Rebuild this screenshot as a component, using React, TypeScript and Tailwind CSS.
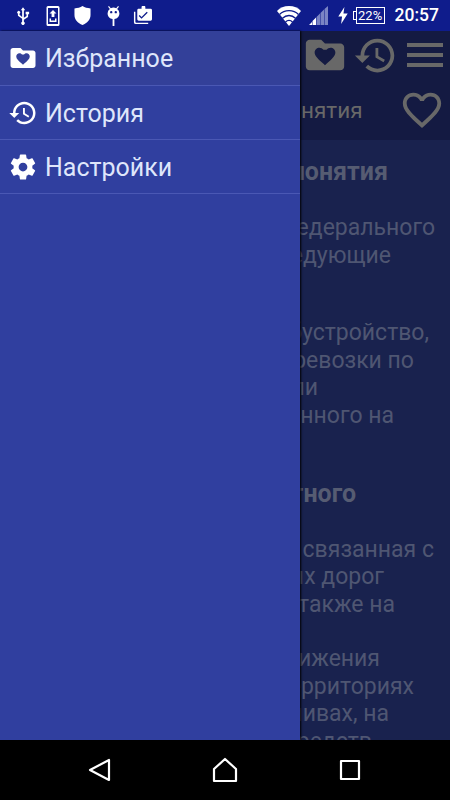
const folderHeart =
  'M10 4H4c-1.1 0-2 .9-2 2v12c0 1.1.9 2 2 2h16c1.1 0 2-.9 2-2V8c0-1.1-.9-2-2-2h-8l-2-2zM12 17.3l-.8-.7C8.3 14 6.6 12.5 6.6 10.7c0-1.4 1.1-2.5 2.5-2.5.8 0 1.6.4 2.1 1h1.6c.5-.6 1.3-1 2.1-1 1.4 0 2.5 1.100 2.500 2.500 0 1.800-1.700 3.300-4.600 5.900l-.8.7z'
const history =
  'M13 3c-4.970 0-9 4.030-9 9H1l3.890 3.890.070.140L9 12H6c0-3.870 3.130-7 7-7s7 3.130 7 7-3.130 7-7 7c-1.930 0-3.680-.790-4.940-2.060l-1.420 1.420C8.270 19.990 10.510 21 13 21c4.970 0 9-4.030 9-9s-4.030-9-9-9zm-1 5v5l4.280 2.540.720-1.210-3.500-2.080V8H12z'
const gear =
  'M19.430 12.980c.040-.320.070-.640.070-.980s-.030-.660-.070-.980l2.110-1.650c.190-.150.240-.420.120-.640l-2-3.460c-.120-.220-.390-.300-.610-.220l-2.490 1c-.520-.400-1.080-.730-1.690-.980l-.380-2.650C14.460 2.180 14.250 2 14 2h-4c-.250 0-.460.180-.490.420l-.380 2.650c-.610.250-1.170.590-1.690.980l-2.490-1c-.230-.090-.490 0-.610.220l-2 3.460c-.130.220-.070.490.120.640l2.110 1.650c-.040.320-.070.650-.070.980s.030.660.070.980l-2.110 1.650c-.190.150-.240.420-.120.640l2 3.460c.120.220.390.300.610.220l2.490-1c.520.400 1.080.730 1.690.980l.380 2.650c.030.240.240.420.490.420h4c.250 0 .460-.180.490-.420l.380-2.650c.610-.250 1.170-.590 1.690-.980l2.490 1c.230.090.490 0 .610-.220l2-3.460c.120-.220.070-.490-.120-.640l-2.110-1.650zM12 15.500c-1.930 0-3.500-1.570-3.500-3.500s1.570-3.500 3.500-3.500 3.500 1.570 3.500 3.500-1.570 3.500-3.500 3.500z'
const heartOutline =
  'M16.500 3c-1.740 0-3.410.810-4.500 2.090C10.910 3.810 9.240 3 7.500 3 4.420 3 2 5.420 2 8.500c0 3.780 3.400 6.860 8.550 11.540L12 21.350l1.450-1.320C18.600 15.360 22 12.280 22 8.500 22 5.420 19.580 3 16.500 3zm-4.400 15.550l-.1.100-.1-.1C7.140 14.240 4 11.390 4 8.500 4 6.500 5.500 5 7.500 5c1.540 0 3.040.990 3.570 2.360h1.870C13.460 5.990 14.960 5 16.500 5c2 0 3.500 1.500 3.500 3.500 0 2.890-3.140 5.740-7.900 10.050z'

function Icon({ d, className }: { d: string; className: string }) {
  return (
    <svg viewBox="0 0 24 24" fill="currentColor" fillRule="evenodd" className={className}>
      <path d={d} />
    </svg>
  )
}

function StatusBar() {
  return (
    <div className="h-[31px] shrink-0 bg-[#0f1c8c] flex items-center text-white">
      <svg viewBox="0 0 16 20" className="w-[14px] h-[18px] ml-[16px]" fill="currentColor">
        <path d="M8 0l2.500 3.500H9V12l3-2V8H11V5h4v3h-1.200v3L9 14.200V16.500a2 2 0 1 1-2 0V13L2.200 9.600V7.400a1.700 1.700 0 1 1 1.800 0V8.700L7 11V3.500H5.500z" />
      </svg>
      <svg viewBox="0 0 14 20" className="w-[14px] h-[20px] ml-[16px]" fill="currentColor" fillRule="evenodd">
        <path d="M2 0h10a1.500 1.500 0 0 1 1.500 1.500v17A1.500 1.500 0 0 1 12 20H2a1.500 1.500 0 0 1-1.500-1.500v-17A1.500 1.500 0 0 1 2 0zM2 2v16h10V2zM7 4l3.500 3.500H8.400V11H5.600V7.500H3.500zM3.500 12.500h1.500v2h4v-2h1.500V16h-7z" />
      </svg>
      <svg viewBox="0 0 18 20" className="w-[17px] h-[19px] ml-[14px]" fill="currentColor">
        <path d="M9 0c2.500 1.500 5 2.300 8.500 2.500v7c0 5-3.500 8.500-8.500 10.500C4 18 .5 14.500.5 9.500v-7C4 2.300 6.500 1.500 9 0z" />
      </svg>
      <svg viewBox="0 0 16 22" className="w-[15px] h-[20px] ml-[15px]" fill="currentColor" fillRule="evenodd">
        <path d="M3 0l2 2.500a6.500 6.500 0 0 1 6 0L13 0l1 .8-2 2.500a6 6 0 0 1 2.500 4.700C14.500 11.500 12 14 9 14.400V22H7v-7.600C4 14 1.500 11.500 1.500 8A6 6 0 0 1 4 3.300L2 .8zM5.500 5.500a1.300 1.300 0 1 0 0 2.600 1.300 1.300 0 0 0 0-2.600zM10.500 5.500a1.300 1.300 0 1 0 0 2.600 1.300 1.300 0 0 0 0-2.600z" />
      </svg>
      <svg viewBox="0 0 20 20" className="w-[19px] h-[19px] ml-[12px]" fill="currentColor" fillRule="evenodd">
        <path d="M5.500 3H9V1.500a2 2 0 0 1 4 0V3h5.500A1.500 1.500 0 0 1 20 4.500V14a1.500 1.500 0 0 1-1.500 1.500H6A1.500 1.500 0 0 1 4.500 14V4.500A1.500 1.500 0 0 1 5.500 3zM9 11.500l-2-2-1 1 3 3 6.500-6.500-1-1z" />
        <path d="M1 6h1.500v10.500a1 1 0 0 0 1 1H16V19H3a2 2 0 0 1-2-2z" />
      </svg>
      <div className="flex-1" />
      <svg viewBox="0 0 24 20" className="w-[24px] h-[20px] ml-[3px]" fill="none">
        <path d="M12 20L0 5C3 1.800 7 0 12 0s9 1.800 12 5z" fill="#ffffff" />
        <path d="M2.500 8.500C5 6 8.500 4.700 12 4.700s7 1.300 9.500 3.800M5.500 12.300C7.300 10.500 9.600 9.500 12 9.500s4.700 1 6.500 2.800M8.500 16C9.500 15 10.700 14.400 12 14.400s2.500.6 3.500 1.600" stroke="#0f1c8c" strokeWidth="1.300" />
      </svg>
      <svg viewBox="0 0 19 19" className="w-[19px] h-[19px] ml-[8px]">
        <path d="M0 19l3-3v3zM3.500 19v-4l3.500-3.500V19z" fill="#ffffff" />
        <path d="M7.500 19v-8l3.500-3.500V19zM11.500 19V7l3.500-3.500V19zM15.500 19V3L19 0v19z" fill="#7a84c4" />
      </svg>
      <svg viewBox="0 0 10 18" className="w-[10px] h-[17px] ml-[10px]" fill="currentColor">
        <path d="M6.500 0L0 10h4l-1 8 7-11H5.500z" />
      </svg>
      <div className="ml-[5px] w-[3px] h-[9px] border-l-[1.500px] border-y-[1.500px] border-white" />
      <div className="w-[29px] h-[17px] border border-white text-[13px] leading-[15px] text-center font-['Roboto',sans-serif]">
        22%
      </div>
      <span className="ml-[10px] mr-[11px] text-[17.500px] font-medium font-['Roboto',sans-serif]">20:57</span>
    </div>
  )
}

function Line({ end, bold, className, children }: { end: number; bold?: boolean; className?: string; children: string }) {
  return (
    <div
      className={`flex justify-end whitespace-nowrap leading-[27.500px] ${
        bold ? 'text-[25px] font-bold text-[#565c72]' : 'text-[23px] text-[#4f5672]'
      } ${className ?? ''}`}
      style={{ paddingRight: 450 - end }}
    >
      <span className="shrink-0">{children}</span>
    </div>
  )
}

function PageBehind() {
  return (
    <div className="flex-1 flex flex-col overflow-hidden ml-[300px] min-w-0 bg-[#19224e] font-['Roboto',sans-serif]">
      <div className="h-[54px] shrink-0 bg-[#141a42] flex items-center text-[#686868] pb-[6px]">
        <Icon d={folderHeart} className="w-[46px] h-[46px] ml-[2px]" />
        <Icon d={history} className="w-[45px] h-[45px] ml-[5px]" />
        <div className="ml-[9px] flex flex-col gap-[6px]">
          <div className="w-[36px] h-[4px] bg-[#686868]" />
          <div className="w-[36px] h-[4px] bg-[#686868]" />
          <div className="w-[36px] h-[4px] bg-[#686868]" />
        </div>
      </div>
      <div className="h-[55px] shrink-0 bg-[#141a42] flex items-center justify-between text-[#686868]">
        <span className="text-[22.500px] ml-[1px] mb-[3px]">нятия</span>
        <Icon d={heartOutline} className="w-[46px] h-[46px] mr-[5px] mb-[6px]" />
      </div>
      <div className="pt-[17.500px]">
        <Line end={388} bold>понятия</Line>
        <Line end={435} className="mt-[29px]">Федерального</Line>
        <Line end={391}>следующие</Line>
        <Line end={429} className="mt-[50px]">обустройство,</Line>
        <Line end={414}>перевозки по</Line>
        <Line end={318}>или</Line>
        <Line end={394}>установленного на</Line>
        <Line end={356} bold className="mt-[51px]">транспортного</Line>
        <Line end={434} className="mt-[28px]">связанная с</Line>
        <Line end={384}>автомобильных дорог</Line>
        <Line end={395}>а также на</Line>
        <Line end={380} className="mt-[27px]">движения</Line>
        <Line end={414}>территориях</Line>
        <Line end={389}>заливах, на</Line>
        <Line end={372}>средств</Line>
      </div>
    </div>
  )
}

function DrawerItem({ d, label, className }: { d: string; label: string; className: string }) {
  return (
    <div className={`border-b border-[#4a58b4] flex items-center pl-[8px] gap-[7px] ${className}`}>
      <Icon d={d} className="w-[30px] h-[30px] text-white" />
      <span className="text-[25px] leading-[30px] pt-[2px] text-[#dfe6fb] font-['Roboto',sans-serif]">{label}</span>
    </div>
  )
}

export default function App() {
  return (
    <div className="w-[450px] h-[800px] flex flex-col overflow-hidden bg-black">
      <StatusBar />
      <div className="relative flex-1 flex min-h-0">
        <PageBehind />
        <div className="absolute left-0 top-0 bottom-0 w-[300px] bg-[#303f9f] shadow-[1px_0_2px_#000]">
          <DrawerItem d={folderHeart} label="Избранное" className="h-[55px] bg-[#334099]" />
          <DrawerItem d={history} label="История" className="h-[54px]" />
          <DrawerItem d={gear} label="Настройки" className="h-[54px]" />
        </div>
      </div>
      <div className="h-[60px] shrink-0 bg-black flex items-center justify-center">
        <svg viewBox="0 0 24 24" className="w-[24px] h-[24px] ml-[-1px]" fill="none" stroke="white" strokeWidth="2.200" strokeLinejoin="round">
          <path d="M21 2v20L2 12z" />
        </svg>
        <svg viewBox="0 0 26 26" className="w-[26px] h-[26px] ml-[100px]" fill="none" stroke="white" strokeWidth="2.200" strokeLinejoin="round">
          <path d="M13 2l11 10v12H2V12z" />
        </svg>
        <svg viewBox="0 0 22 22" className="w-[22px] h-[22px] ml-[101px]" fill="none" stroke="white" strokeWidth="2.200" strokeLinejoin="round">
          <path d="M2 2h18v18H2z" />
        </svg>
      </div>
    </div>
  )
}
